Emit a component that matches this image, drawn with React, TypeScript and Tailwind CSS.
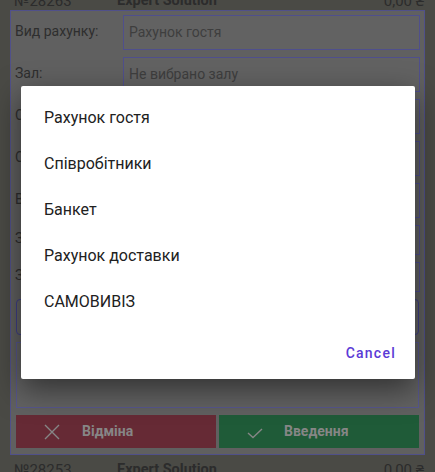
import React from "react";

const font = { fontFamily: "Roboto, 'Noto Sans', sans-serif" };

function Row({ label, value, h }: { label: string; value: string; h: string }) {
  return (
    <div className={`flex items-center ${h}`}>
      <div className="w-[112px] pl-[4px] text-[14px] text-[#2e2e2e] -mt-[3px] whitespace-nowrap overflow-hidden">{label}</div>
      <div className="flex-1 h-full mr-[4px] border border-[#4f4f8c] bg-[#626262] flex items-center pl-[5px] text-[14px] text-[#3e3e3e]">
        {value}
      </div>
    </div>
  );
}

export default function App() {
  const items = ["Рахунок гостя", "Співробітники", "Банкет", "Рахунок доставки", "САМОВИВІЗ"];
  return (
    <div className="relative w-[435px] h-[472px] overflow-hidden bg-[#4a4a45]" style={font}>
      <div className="flex flex-col">
        <div className="flex items-center h-[18px] -mt-[8px] px-[14px] text-[15px] text-[#2c2c2c]">
          <span className="w-[103px]">№28263</span>
          <span className="font-bold text-[14.5px]">Expert Solution</span>
          <span className="ml-auto -mr-[3px]">0,00 ₴</span>
        </div>
        <div className="mx-[10px] h-[445px] border border-[#50508a] bg-[#606060] flex flex-col pt-[4px] gap-[7px]">
          <Row label="Вид рахунку:" value="Рахунок гостя" h="h-[35px]" />
          <Row label="Зал:" value="Не вибрано залу" h="h-[35px]" />
          <Row label="Стіл:" value="" h="h-[35px]" />
          <Row label="Статус:" value="" h="h-[35px]" />
          <Row label="Вартість:" value="" h="h-[35px]" />
          <Row label="Знижка:" value="" h="h-[30px]" />
          <Row label="Замовник:" value="" h="h-[30px]" />
          <div className="mx-[5px] h-[36px] rounded-[4px] border border-[#3e3e86] bg-[#626262]" />
          <div className="mx-[5px] h-[66px] border border-[#56568c] bg-[#626262]" />
          <div className="mx-[5px] h-[33px] flex gap-[3px]">
            <div className="w-[200px] bg-[#662a35] flex items-center pl-[28px] text-[#868686] font-bold text-[14px]">
              <svg width="16" height="16" viewBox="0 0 16 16" className="mr-[22px]">
                <path d="M1 1 L15 15 M15 1 L1 15" stroke="#868686" strokeWidth="1.4" fill="none" />
              </svg>
              Відміна
            </div>
            <div className="flex-1 bg-[#1f5b38] flex items-center pl-[28px] text-[#868686] font-bold text-[14px]">
              <svg width="16" height="12" viewBox="0 0 16 12" className="mr-[21px] mt-[2px]">
                <path d="M1 6 L6 10.5 L15 2" stroke="#868686" strokeWidth="1.4" fill="none" />
              </svg>
              Введення
            </div>
          </div>
        </div>
        <div className="flex items-center h-[18px] mt-[6px] px-[14px] text-[15px] text-[#2c2c2c]">
          <span className="w-[103px]">№28253</span>
          <span className="font-bold text-[14.5px]">Expert Solution</span>
          <span className="ml-auto -mr-[3px]">0,00 ₴</span>
        </div>
      </div>

      <div className="absolute left-[21px] top-[86px] w-[394px] h-[293px] bg-white rounded-[2px] shadow-[0_10px_30px_rgba(0,0,0,0.5)] flex flex-col pt-[9px]">
        {items.map((t) => (
          <div key={t} className="h-[46px] flex items-center pl-[23px] text-[16px] text-[#212121]">
            {t}
          </div>
        ))}
        <div className="flex justify-end pr-[19px] mt-[10px]">
          <div className="h-[36px] flex items-center text-[14px] font-medium tracking-[1.25px] text-[#5b3ad6]">
            Cancel
          </div>
        </div>
      </div>
    </div>
  );
}
